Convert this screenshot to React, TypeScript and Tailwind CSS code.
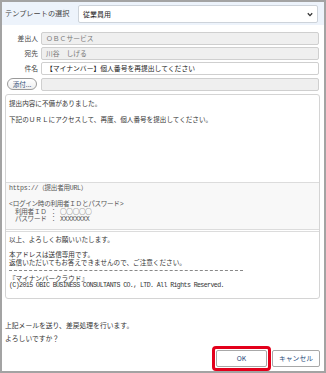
import React from 'react';

const jp = "font-['Noto_Sans_CJK_JP',sans-serif]";
const mono = "font-['Liberation_Mono','Noto_Sans_CJK_JP',monospace]";

const Row: React.FC<{ label: string; value: string; editable?: boolean }> = ({ label, value, editable }) => (
  <div className="flex items-center h-[13px]">
    <div className="w-[37px] text-right pr-[1px] text-[6.8px] text-[#444]">{label}</div>
    <div
      className={`ml-[2px] flex-1 h-[13px] flex items-center px-[4px] rounded-[2px] border border-[#cfcfcf] text-[6.8px] ${
        editable ? 'bg-white text-[#222]' : 'bg-[#efefef] text-[#777]'
      }`}
    >
      {value}
    </div>
  </div>
);

export default function App() {
  return (
    <div className={`w-[326px] h-[373px] border-2 border-[#a3a3a3] bg-white flex flex-col ${jp} leading-none`}>
      {/* template selector */}
      <div className="h-[23px] bg-[#edf3fb] flex items-start pt-[3px] pl-[3px] pr-[6px]">
        <div className="h-[18px] flex items-center text-[7.2px] text-[#444] w-[73px]">テンプレートの選択</div>
        <div className="flex-1 h-[18px] bg-white border border-[#cdd3da] rounded-[2px] flex items-center justify-between px-[4px] text-[7px] text-[#222]">
          <span>従業員用</span>
          <svg width="6" height="5" viewBox="0 0 6 5">
            <path d="M0.8 1.2 L3 3.6 L5.2 1.2" fill="none" stroke="#333" strokeWidth="1.3" />
          </svg>
        </div>
      </div>

      {/* header fields */}
      <div className="flex flex-col gap-[2px] mt-[7px] pr-[5px]">
        <Row label="差出人" value="ＯＢＣサービス" />
        <Row label="宛先" value="川谷　しげる" />
        <Row label="件名" value="【マイナンバー】個人番号を再提出してください" editable />
        <div className="flex items-center h-[13px] mt-[1px]">
          <div className="w-[37px] flex justify-end pr-[2px]">
            <div className="w-[30px] h-[12px] rounded-[6px] border border-[#9a9a9a] bg-gradient-to-b from-white to-[#eeeeee] flex items-center justify-center text-[6.6px] text-[#34527a]">
              添付...
            </div>
          </div>
          <div className="ml-[2px] flex-1 h-[13px] rounded-[2px] border border-[#cfcfcf] bg-[#efefef]" />
        </div>
      </div>

      {/* body */}
      <div className="ml-[3px] mr-[4px] mt-[3px] h-[210px] border border-[#d4d4d4] rounded-[3px] flex flex-col text-[6.6px] text-[#333]">
        <div className="h-[87px] px-[3px] pt-[4px] leading-[8px]">
          <div>提出内容に不備がありました。</div>
          <div className="h-[8px]" />
          <div>下記のＵＲＬにアクセスして、再度、個人番号を提出してください。</div>
        </div>
        <div className={`h-[48px] bg-[#f8f8f8] border-y border-[#dcdcdc] px-[3px] pt-[2px] ${mono} text-[#555] leading-[7px]`}>
          <div className="tracking-[-0.3px]">https://（提出者用URL）</div>
          <div className="h-[9px]" />
          <div className="tracking-[-0.3px]">&lt;ログイン時の利用者ＩＤとパスワード&gt;</div>
          <div className="pl-[6px] tracking-[-0.3px]">
            利用者ＩＤ ： <span className={jp}>○○○○○</span>
          </div>
          <div className="pl-[6px] tracking-[-0.3px]">パスワード ： XXXXXXXX</div>
        </div>
        <div className="flex-1 mt-[1px] border-t border-[#dcdcdc] px-[3px] pt-[3px] leading-[8px]">
          <div>以上、よろしくお願いいたします。</div>
          <div className="h-[7px]" />
          <div>本アドレスは送信専用です。</div>
          <div>返信いただいてもお答えできませんので、ご注意ください。</div>
          <div className="w-[234px] border-t border-dashed border-[#888] mt-[4px] mb-[3px]" />
          <div>『マイナンバークラウド』</div>
          <div className={`${mono} tracking-[-0.6px]`}>(C)2015 OBIC BUSINESS CONSULTANTS CO., LTD. All Rights Reserved.</div>
        </div>
      </div>

      {/* confirmation */}
      <div className="pl-[3px] mt-[20px] text-[6.8px] text-[#333] leading-[13px]">
        <div>上記メールを送り、差戻処理を行います。</div>
        <div>よろしいですか？</div>
      </div>

      <div className="flex justify-end items-center gap-[1px] pr-[4px] mt-[1px]">
        <div className="border-[3px] border-[#e3001b] rounded-[4px] p-[1px]">
          <button className="w-[51px] h-[17px] border border-[#a8a8a8] rounded-[2px] bg-white text-[6.8px] text-[#2a4a7a] flex items-center justify-center">
            OK
          </button>
        </div>
        <button className="w-[48px] h-[17px] border border-[#a8a8a8] rounded-[2px] bg-white text-[6.8px] text-[#2a4a7a] flex items-center justify-center">
          キャンセル
        </button>
      </div>
    </div>
  );
}
